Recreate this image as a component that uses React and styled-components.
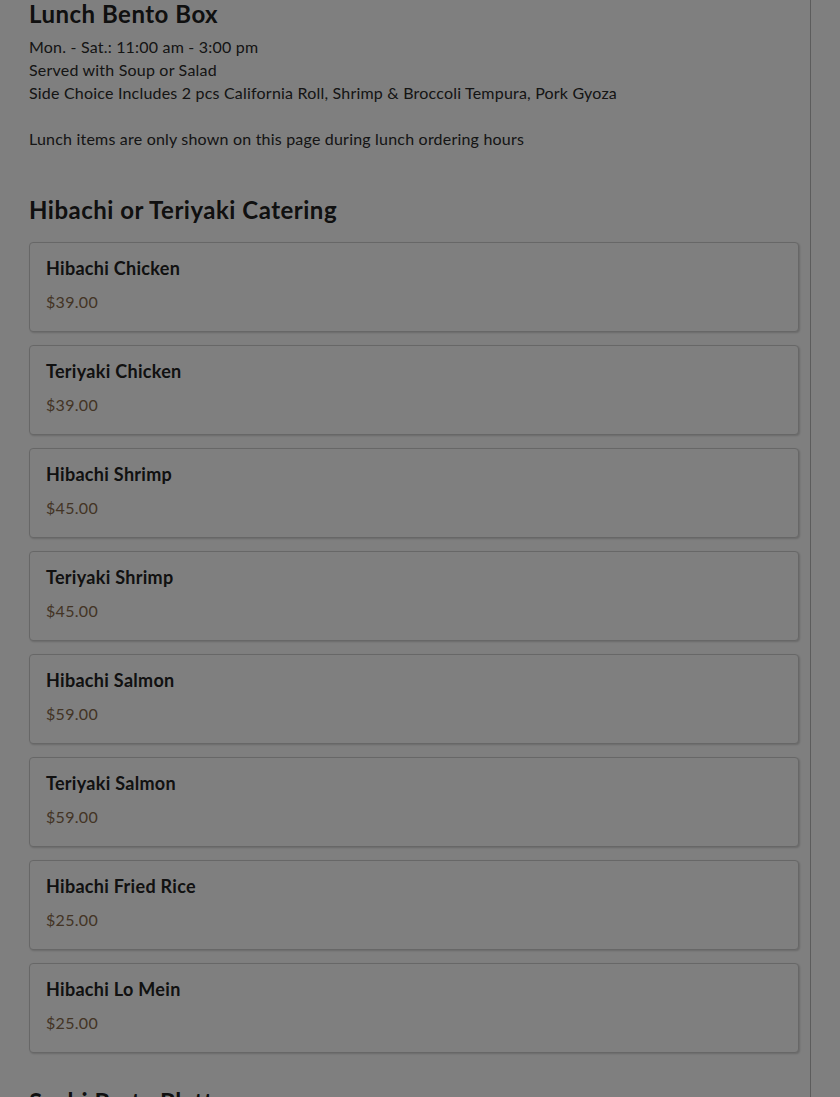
import React from 'react'
import styled, { createGlobalStyle } from 'styled-components'

const GlobalStyle = createGlobalStyle`
    html, body {
        margin: 0;
        padding: 0;
        background: #ffffff;
        font-family: Lato, "Noto Sans", "Liberation Sans", sans-serif;
        color: #262626;
    }
`

const Page = styled.div`
    display: flex;
    height: 1097px;
    overflow: hidden;
`

const Main = styled.main`
    width: 811px;
    box-sizing: border-box;
    border-right: 1px solid #b8b8b8;
    padding: 0 11px 0 29px;
`

const Side = styled.aside`
    flex: 1;
`

const Content = styled.div`
    margin-top: -1px;
`

const Section = styled.section`
    margin-bottom: ${props => props.gap || 44}px;
`

const SectionTitle = styled.h2`
    margin: 0 0 ${props => props.below || 6}px;
    font-size: 24px;
    line-height: 30px;
    font-weight: 700;
    letter-spacing: 0.5px;
    color: #202020;
`

const Note = styled.p`
    margin: 0;
    font-size: 16px;
    line-height: 23px;
    min-height: 23px;
    letter-spacing: 0.2px;
    color: #2a2a2a;
`

const Card = styled.div`
    box-sizing: border-box;
    height: 90px;
    margin-bottom: 13px;
    padding: 13px 16px 16px;
    border: 1px solid #cfcfcf;
    border-radius: 4px;
    background: #ffffff;
    box-shadow: 1px 1px 2px rgba(0, 0, 0, 0.18);
`

const ItemName = styled.h3`
    margin: 0 0 10px;
    font-size: 18px;
    line-height: 24px;
    font-weight: 700;
    letter-spacing: 0.3px;
    color: #222222;
`

const Price = styled.div`
    font-size: 16px;
    line-height: 24px;
    letter-spacing: 0.3px;
    color: #86694a;
`

const Overlay = styled.div`
    position: fixed;
    inset: 0;
    background: rgba(0, 0, 0, 0.5);
`

const items = [
    ['Hibachi Chicken', '$39.00'],
    ['Teriyaki Chicken', '$39.00'],
    ['Hibachi Shrimp', '$45.00'],
    ['Teriyaki Shrimp', '$45.00'],
    ['Hibachi Salmon', '$59.00'],
    ['Teriyaki Salmon', '$59.00'],
    ['Hibachi Fried Rice', '$25.00'],
    ['Hibachi Lo Mein', '$25.00'],
]

function App() {
    return (
        <>
            <GlobalStyle />
            <Page>
                <Main>
                    <Content>
                        <Section gap={45}>
                            <SectionTitle>Lunch Bento Box</SectionTitle>
                            <Note>Mon. - Sat.: 11:00 am - 3:00 pm</Note>
                            <Note>Served with Soup or Salad</Note>
                            <Note>Side Choice Includes 2 pcs California Roll, Shrimp &amp; Broccoli Tempura, Pork Gyoza</Note>
                            <Note />
                            <Note>Lunch items are only shown on this page during lunch ordering hours</Note>
                        </Section>
                        <Section gap={34}>
                            <SectionTitle below={17}>Hibachi or Teriyaki Catering</SectionTitle>
                            {items.map(([name, price]) => (
                                <Card key={name}>
                                    <ItemName>{name}</ItemName>
                                    <Price>{price}</Price>
                                </Card>
                            ))}
                        </Section>
                        <Section>
                            <SectionTitle>Sushi Party Platters</SectionTitle>
                        </Section>
                    </Content>
                </Main>
                <Side />
            </Page>
            <Overlay />
        </>
    )
}

export default App
